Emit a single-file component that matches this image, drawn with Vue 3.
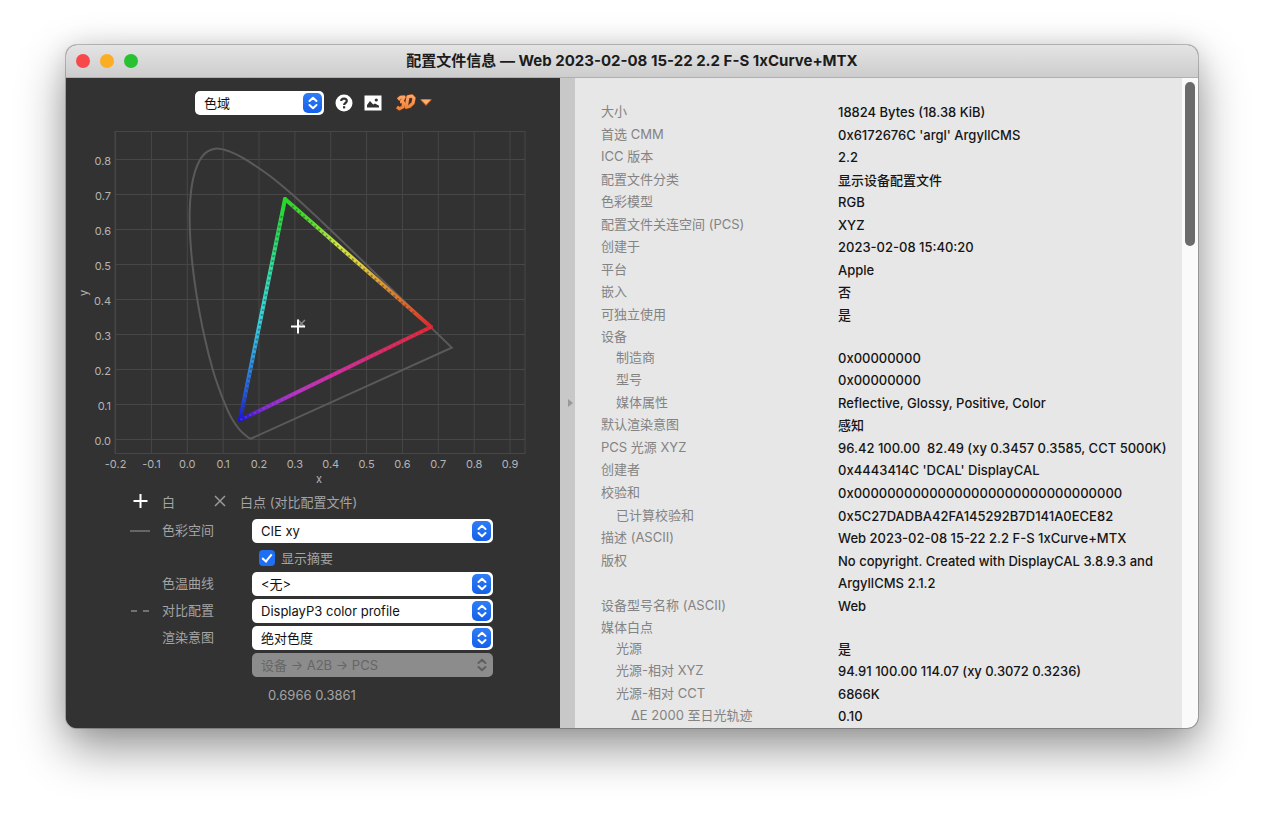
<script setup>
import { ref } from 'vue'

const view = ref('色域')
const space = ref('CIE xy')
const curve = ref('<无>')
const compare = ref('DisplayP3 color profile')
const intent = ref('绝对色度')
const direction = ref('设备 → A2B → PCS')
const summary = ref(true)

const rows = [
  ['大小', '18824 Bytes (18.38 KiB)', 0],
  ['首选 CMM', "0x6172676C 'argl' ArgyllCMS", 0],
  ['ICC 版本', '2.2', 0],
  ['配置文件分类', '显示设备配置文件', 0],
  ['色彩模型', 'RGB', 0],
  ['配置文件关连空间 (PCS)', 'XYZ', 0],
  ['创建于', '2023-02-08 15:40:20', 0],
  ['平台', 'Apple', 0],
  ['嵌入', '否', 0],
  ['可独立使用', '是', 0],
  ['设备', '', 0],
  ['制造商', '0x00000000', 1],
  ['型号', '0x00000000', 1],
  ['媒体属性', 'Reflective, Glossy, Positive, Color', 1],
  ['默认渲染意图', '感知', 0],
  ['PCS 光源 XYZ', '96.42 100.00  82.49 (xy 0.3457 0.3585, CCT 5000K)', 0],
  ['创建者', "0x4443414C 'DCAL' DisplayCAL", 0],
  ['校验和', '0x00000000000000000000000000000000', 0],
  ['已计算校验和', '0x5C27DADBA42FA145292B7D141A0ECE82', 1],
  ['描述 (ASCII)', 'Web 2023-02-08 15-22 2.2 F-S 1xCurve+MTX', 0],
  ['版权', 'No copyright. Created with DisplayCAL 3.8.9.3 and\nArgyllCMS 2.1.2', 0],
  ['设备型号名称 (ASCII)', 'Web', 0],
  ['媒体白点', '', 0],
  ['光源', '是', 1],
  ['光源-相对 XYZ', '94.91 100.00 114.07 (xy 0.3072 0.3236)', 1],
  ['光源-相对 CCT', '6866K', 1],
  ['ΔE 2000 至日光轨迹', '0.10', 2],
]

// Chart scale: chromaticity to drawing units
const px = x => 121.3 + 358.6 * x
const py = y => 317.5 - 350 * y
const xTicks = Array.from({ length: 12 }, (_, i) => (i - 2) / 10)
const yTicks = Array.from({ length: 9 }, (_, i) => i / 10)

// Spectral locus, CIE 1931 2° observer
const locus = [
  [0.1741, 0.005], [0.1644, 0.0109], [0.144, 0.0297], [0.1241, 0.0578], [0.1096, 0.0868],
  [0.0913, 0.1327], [0.0687, 0.2007], [0.0454, 0.295], [0.0235, 0.4127], [0.0082, 0.5384],
  [0.0039, 0.6548], [0.0139, 0.7502], [0.0389, 0.812], [0.0743, 0.8338], [0.1142, 0.8262],
  [0.1547, 0.8059], [0.2296, 0.7543], [0.3016, 0.6923], [0.3731, 0.6245], [0.4441, 0.5547],
  [0.5125, 0.4866], [0.5752, 0.4242], [0.627, 0.3725], [0.6915, 0.3083], [0.7347, 0.2653],
].map(([x, y]) => [px(x) + 1, py(y) + 1])

function smooth(p) {
  let d = `M${p[0]}`
  for (let i = 0; i < p.length - 1; i++) {
    const a = p[i - 1] || p[i], b = p[i], c = p[i + 1], e = p[i + 2] || c
    d += `C${b[0] + (c[0] - a[0]) / 6},${b[1] + (c[1] - a[1]) / 6} ${c[0] - (e[0] - b[0]) / 6},${c[1] - (e[1] - b[1]) / 6} ${c}`
  }
  return d + 'Z'
}
const locusPath = smooth(locus)
const threeD = 'M3 6.500 5.500 4.300 9 4.100 7 8.200 8.800 10.300 7.800 14 4.500 15.800 2 14M5 8.800 7 8.500M13 3.800 11.200 14.200 14.500 13.400 18 10.200 19 5.200 17 3z'
</script>

<template>
  <div class="desktop">
    <main class="window">
      <header class="titlebar">
        <div class="lights">
          <button class="light red" aria-label="关闭"></button>
          <button class="light amber" aria-label="最小化"></button>
          <button class="light green" aria-label="缩放"></button>
        </div>
        <h1>配置文件信息 — Web 2023-02-08 15-22 2.2 F-S 1xCurve+MTX</h1>
      </header>

      <div class="content">
        <section class="left">
          <div class="toolbar">
            <div class="picker view-picker">
              <select v-model="view" aria-label="视图"><option>色域</option></select>
              <span class="knob"><svg width="10" height="14" viewBox="0 0 10 14"><path d="M1.5 5 5 1.7 8.5 5M1.5 9 5 12.3 8.5 9" /></svg></span>
            </div>
            <button class="tool" aria-label="帮助">
              <svg width="18" height="18" viewBox="0 0 18 18"><circle cx="9" cy="9" r="8.5" fill="#fff" /><path d="M6.2 7.100C6.2 3.7 11.800 3.800 11.800 7c0 2-2.700 2-2.700 4" fill="none" stroke="#323232" stroke-width="2.2" /><rect x="8" y="12.2" width="2.2" height="2.2" fill="#323232" /></svg>
            </button>
            <button class="tool" aria-label="保存图像">
              <svg width="18" height="18" viewBox="0 0 18 18"><path d="M.5 1.5h17v15H.5z" fill="#fff" /><path d="M3 13.5V11l3-4 3.2 3.6L11 9.5l4 2.3v1.7z" fill="#323232" /><circle cx="12.3" cy="6" r="1.6" fill="#323232" /></svg>
            </button>
            <button class="tool three-d" aria-label="三维视图">
              <svg width="38" height="20" viewBox="0 0 38 20">
                <defs>
                  <linearGradient id="orange" gradientUnits="userSpaceOnUse" x1="0" y1="3" x2="0" y2="17"><stop offset="0" stop-color="#ffa768" /><stop offset="1" stop-color="#ee8038" /></linearGradient>
                </defs>
                <g fill="none" stroke-linejoin="round">
                  <path :d="threeD" stroke="#8e3f10" stroke-width="4" />
                  <path :d="threeD" stroke="url(#orange)" stroke-width="3" />
                </g>
                <path d="M25 6.5h12L31 13z" fill="#c8621f" />
                <path d="M26 6.500h10L31 11.500z" fill="#ffb070" />
              </svg>
            </button>
          </div>

          <svg class="chart" viewBox="0 0 494 366" role="img" aria-label="色域图">
            <defs>
              <linearGradient id="gr" gradientUnits="userSpaceOnUse" x1="219" y1="76" x2="365" y2="205">
                <stop offset="0" stop-color="#25d825" /><stop offset=".18" stop-color="#55dc2e" /><stop offset=".36" stop-color="#cfe845" /><stop offset=".52" stop-color="#e0cc3c" /><stop offset=".7" stop-color="#dc8c30" /><stop offset=".85" stop-color="#d8602c" /><stop offset="1" stop-color="#e0242e" />
              </linearGradient>
              <linearGradient id="rb" gradientUnits="userSpaceOnUse" x1="365" y1="205" x2="174" y2="298">
                <stop offset="0" stop-color="#e0242e" /><stop offset=".25" stop-color="#d82560" /><stop offset=".5" stop-color="#cf2a9e" /><stop offset=".7" stop-color="#b830c4" /><stop offset=".88" stop-color="#7c26d0" /><stop offset="1" stop-color="#1c14d8" />
              </linearGradient>
              <linearGradient id="bg" gradientUnits="userSpaceOnUse" x1="174" y1="298" x2="219" y2="76">
                <stop offset="0" stop-color="#1c14d8" /><stop offset=".12" stop-color="#2458dc" /><stop offset=".28" stop-color="#2f9be0" /><stop offset=".45" stop-color="#35d2dc" /><stop offset=".65" stop-color="#35dcae" /><stop offset=".82" stop-color="#2cd964" /><stop offset="1" stop-color="#25d825" />
              </linearGradient>
            </defs>
            <g class="grid">
              <rect x="49" y="9.500" width="410" height="322" />
              <line v-for="t in xTicks" :key="t" :x1="px(t)" :x2="px(t)" y1="9" y2="332" />
              <line v-for="t in yTicks" :key="t" x1="49" x2="459" :y1="py(t)" :y2="py(t)" />
            </g>
            <g class="ticks">
              <text v-for="t in xTicks" :key="t" :x="px(t)" y="346" text-anchor="middle">{{ t.toFixed(1) }}</text>
              <text v-for="t in yTicks" :key="t" x="45" :y="py(t) + 5" text-anchor="end">{{ t.toFixed(1) }}</text>
              <text x="253" y="361" text-anchor="middle">x</text>
              <text transform="translate(22 171) rotate(-90)" text-anchor="middle">y</text>
            </g>
            <path class="locus" :d="locusPath" />
            <g class="gamut">
              <path d="M219 77 365 205" stroke="url(#gr)" />
              <path d="M365 205 174 298" stroke="url(#rb)" />
              <path d="M174 298 219 77" stroke="url(#bg)" />
            </g>
            <path class="compare" d="M226 84 350 193" />
            <path class="compare" d="M176 292 216 92" />
            <path class="compare faint" d="M365 205 174 298" />
            <path d="M232 198l7 7M239 198l-7 7" stroke="#888" stroke-width="1.500" />
            <path d="M225 204.500h14M232 197.500v14" stroke="#fff" stroke-width="2" />
          </svg>

          <div class="legend">
            <svg class="mark" width="20" height="16" viewBox="0 0 20 16"><path d="M3.500 8h14M10.500 1v14" stroke="#fff" stroke-width="2" /></svg>
            <span>白</span>
            <svg class="mark cross" width="20" height="16" viewBox="0 0 20 16"><path d="M5 3l10 10M15 3 5 13" stroke="#999" stroke-width="1.500" /></svg>
            <span>白点 (对比配置文件)</span>
          </div>

          <div class="form">
            <svg class="mark" width="20" height="4" viewBox="0 0 20 4"><path d="M0 2h20" stroke="#666" stroke-width="2" /></svg>
            <label for="space">色彩空间</label>
            <div class="picker">
              <select id="space" v-model="space"><option>CIE xy</option></select>
              <span class="knob"><svg width="10" height="14" viewBox="0 0 10 14"><path d="M1.5 5 5 1.7 8.5 5M1.5 9 5 12.3 8.5 9" /></svg></span>
            </div>
            <label class="check"><input v-model="summary" type="checkbox" />显示摘要</label>
            <label class="second" for="curve">色温曲线</label>
            <div class="picker">
              <select id="curve" v-model="curve"><option>&lt;无&gt;</option></select>
              <span class="knob"><svg width="10" height="14" viewBox="0 0 10 14"><path d="M1.5 5 5 1.7 8.5 5M1.5 9 5 12.3 8.5 9" /></svg></span>
            </div>
            <svg class="mark" width="20" height="4" viewBox="0 0 20 4"><path d="M1 2h6M13 2h6" stroke="#888" stroke-width="1.500" /></svg>
            <label for="compare">对比配置</label>
            <div class="picker">
              <select id="compare" v-model="compare"><option>DisplayP3 color profile</option></select>
              <span class="knob"><svg width="10" height="14" viewBox="0 0 10 14"><path d="M1.5 5 5 1.7 8.5 5M1.5 9 5 12.3 8.5 9" /></svg></span>
            </div>
            <label class="second" for="intent">渲染意图</label>
            <div class="picker">
              <select id="intent" v-model="intent"><option>绝对色度</option></select>
              <span class="knob"><svg width="10" height="14" viewBox="0 0 10 14"><path d="M1.5 5 5 1.7 8.5 5M1.5 9 5 12.3 8.5 9" /></svg></span>
            </div>
            <div class="picker third off">
              <select v-model="direction" aria-label="转换方向" disabled><option>设备 → A2B → PCS</option></select>
              <span class="knob"><svg width="10" height="14" viewBox="0 0 10 14"><path d="M1.5 5 5 1.7 8.5 5M1.5 9 5 12.3 8.5 9" /></svg></span>
            </div>
            <output class="third readout">0.6966 0.3861</output>
          </div>
        </section>

        <div class="sash"><svg width="5" height="8" viewBox="0 0 5 8"><path d="M0 0 5 4 0 8z" fill="#999" /></svg></div>

        <section class="right">
          <table>
            <tbody>
              <tr v-for="(r, i) in rows" :key="i">
                <th scope="row" :class="'level' + r[2]">{{ r[0] }}</th>
                <td>{{ r[1] }}</td>
              </tr>
            </tbody>
          </table>
        </section>
        <div class="track"><div class="thumb"></div></div>
      </div>
    </main>
  </div>
</template>

<style>
body {
  background: #fff;
}
</style>

<style scoped>
.desktop {
  box-sizing: border-box;
  min-height: 100vh;
  padding: 45px 66px 88px;
  display: flex;
  font-family: Inter, "Noto Sans CJK SC", sans-serif;
  font-size: 13px;
}
.window {
  flex: 1;
  display: flex;
  flex-direction: column;
  border-radius: 11px;
  overflow: hidden;
  background: #323232;
  box-shadow: 0 0 0 1px rgba(0, 0, 0, 0.22), 0 20px 48px rgba(0, 0, 0, 0.42), 0 0 24px rgba(0, 0, 0, 0.1);
}
.titlebar {
  box-sizing: border-box;
  height: 33px;
  display: grid;
  grid-template-columns: 1fr auto 1fr;
  align-items: center;
  padding: 0 10px;
  background: linear-gradient(#e4e4e4, #cdcdcd);
  border-bottom: 1px solid #b0b0b0;
}
h1 {
  margin: 0;
  font-size: 15px;
  line-height: 20px;
  font-weight: 700;
  color: #1c1c1c;
}
.lights {
  display: flex;
  gap: 10px;
}
.light {
  width: 14px;
  height: 14px;
  padding: 0;
  border: 0;
  border-radius: 50%;
}
.red { background: #f9484a; }
.amber { background: #fbad24; }
.green { background: #28c131; }
.content {
  flex: 1;
  display: flex;
}
.left {
  width: 494px;
  color: #a4a4a4;
  background: #323232;
}
.toolbar {
  display: flex;
  align-items: center;
  gap: 11px;
  padding: 13px 0 0 129px;
}
.view-picker {
  width: 129px;
}
.tool {
  display: flex;
  padding: 0;
  border: 0;
  background: none;
}
.three-d {
  margin-left: 2px;
}
.picker {
  position: relative;
  height: 24px;
}
select {
  appearance: none;
  display: block;
  width: 100%;
  height: 24px;
  padding: 0 28px 0 9px;
  border: 0;
  border-radius: 5px;
  background: #fff;
  color: #111;
  font: inherit;
}
.knob {
  position: absolute;
  top: 2px;
  right: 2px;
  width: 19px;
  height: 20px;
  display: flex;
  align-items: center;
  justify-content: center;
  border-radius: 5px;
  background: linear-gradient(#2f7df6, #1560ea);
  pointer-events: none;
}
.knob path {
  fill: none;
  stroke: #fff;
  stroke-width: 2;
  stroke-linecap: round;
  stroke-linejoin: round;
}
.off select {
  background: #8c8c8c;
  color: #666;
  opacity: 1;
}
.off .knob {
  background: none;
}
.off .knob path {
  stroke: #606060;
}
.chart {
  display: block;
  width: 100%;
  margin-top: 7px;
}
.grid {
  fill: none;
  stroke: #474747;
}
.ticks {
  fill: #b4b4b4;
  font-size: 11px;
}
.locus {
  fill: none;
  stroke: #5a5a5a;
  stroke-width: 2;
}
.gamut {
  fill: none;
  stroke-width: 4;
  stroke-linecap: round;
}
.compare {
  fill: none;
  stroke: rgba(60, 60, 60, 0.5);
  stroke-width: 2;
  stroke-dasharray: 2 3;
}
.faint {
  stroke: rgba(140, 110, 140, 0.4);
}
.legend {
  display: flex;
  align-items: center;
  height: 22px;
  margin-top: 2px;
  padding-left: 64px;
}
.legend .mark {
  margin-right: 12px;
}
.legend .cross {
  margin-left: 35px;
  margin-right: 10px;
}
.form {
  display: grid;
  grid-template-columns: 20px 78px 241px;
  grid-template-rows: 24px 23px;
  column-gap: 12px;
  row-gap: 3px;
  grid-auto-rows: 24px;
  align-items: center;
  padding: 7px 0 0 64px;
}
.form > label {
  height: 24px;
  line-height: 22px;
}
.second { grid-column: 2; }
.third { grid-column: 3; }
.check {
  grid-column: 3;
  display: flex;
  align-items: center;
  gap: 6px;
  padding-left: 7px;
}
.check input {
  appearance: none;
  width: 16px;
  height: 16px;
  margin: 0;
  border-radius: 4px;
  background: #1f6ff2;
  display: grid;
  place-items: center;
}
.check input:checked::before {
  content: "";
  width: 4px;
  height: 8px;
  margin-bottom: 2px;
  border: solid #fff;
  border-width: 0 2px 2px 0;
  transform: rotate(40deg);
}
.readout {
  padding: 6px 0 0 16px;
}
.sash {
  width: 15px;
  display: flex;
  align-items: center;
  justify-content: center;
  padding-left: 5px;
  box-sizing: border-box;
  background: #c8c8c8;
}
.right {
  flex: 1;
  display: flex;
  box-sizing: border-box;
  padding: 23px 0 0 26px;
  background: #e7e7e7;
}
table {
  width: 100%;
  border-collapse: collapse;
  table-layout: fixed;
}
th,
td {
  padding: 0;
  line-height: 22px;
  text-align: left;
  vertical-align: top;
  white-space: pre-wrap;
}
th {
  width: 237px;
  line-height: 20px;
  font-weight: 400;
  color: #838383;
}
.level1 { padding-left: 15px; }
.level2 { padding-left: 30px; }
td {
  font-weight: 500;
  color: #151515;
}
.track {
  box-sizing: border-box;
  width: 16px;
  padding: 4px 3px;
  background: #fafafa;
}
.thumb {
  height: 164px;
  border-radius: 5px;
  background: #6b6b6b;
}
</style>
